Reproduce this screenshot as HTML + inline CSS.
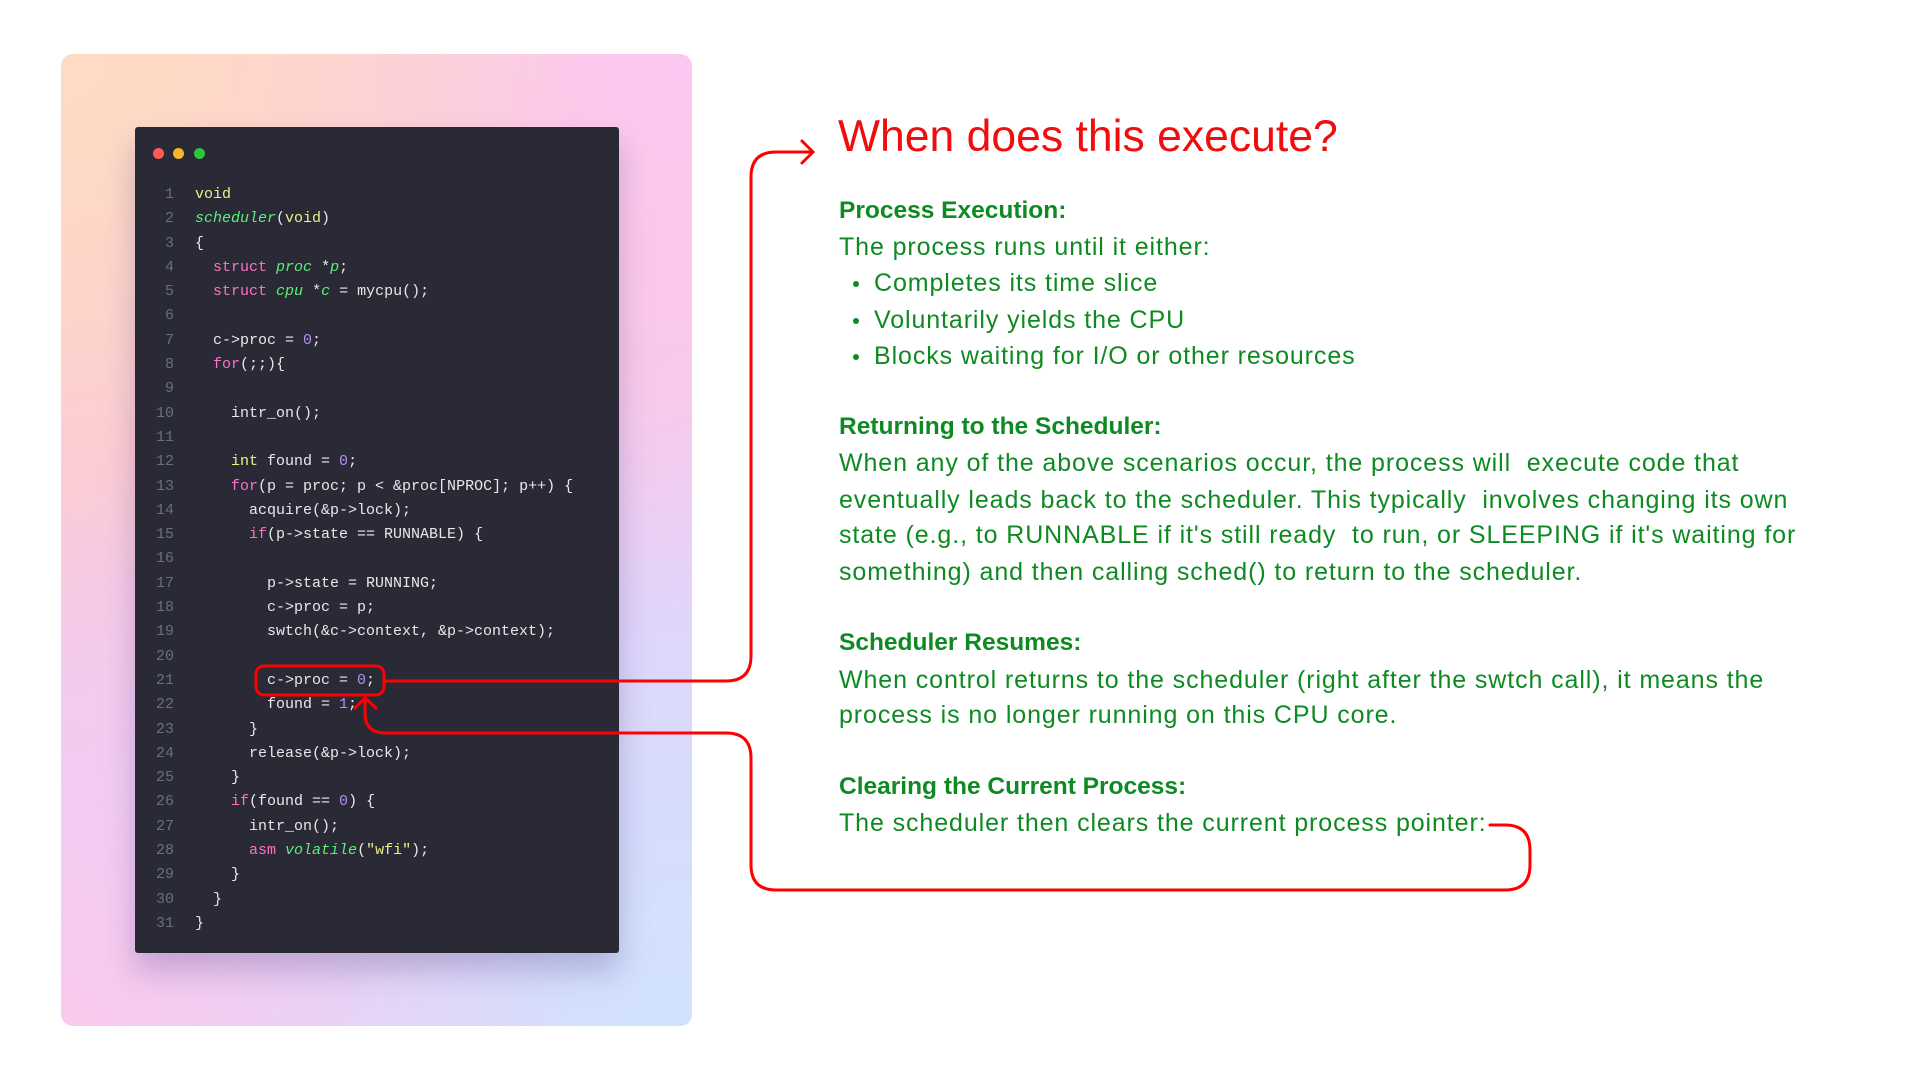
<!DOCTYPE html>
<html><head><meta charset="utf-8"><style>
*{margin:0;padding:0;box-sizing:border-box}
body{width:1920px;height:1080px;background:#fff;position:relative;overflow:hidden;font-family:"Liberation Sans",sans-serif}
.card{position:absolute;left:61px;top:54px;width:631px;height:972px;border-radius:12px;
background:
radial-gradient(circle at 0% 0%,#fedcc4 0%,rgba(254,220,196,0) 45%),
radial-gradient(circle at 100% 0%,#fcc8f2 0%,rgba(252,200,242,0) 50%),
radial-gradient(circle at 0% 100%,#fbc9ec 0%,rgba(251,201,236,0) 45%),
radial-gradient(circle at 100% 100%,#d2e2fd 0%,rgba(210,226,253,0) 55%),
linear-gradient(160deg,#fdd0c8 0%,#fcc8d8 35%,#e8cefa 65%,#d6d8fc 100%);}
.win{position:absolute;left:135px;top:127px;width:484px;height:826px;background:#292a36;border-radius:3px;box-shadow:0 18px 30px rgba(60,40,120,.25)}
.dot{position:absolute;top:148px;width:11px;height:11px;border-radius:50%}
pre{position:absolute;top:183px;left:135px;font-family:"Liberation Mono",monospace;font-size:15px;line-height:24.3px;color:#e8e8ea}
.n{display:inline-block;width:39px;text-align:right;color:#6c6e7c;margin-right:21px}
.y{color:#eef08a}.g{color:#5af078;font-style:italic}.p{color:#ff6fc6}.u{color:#b48ef5}
.t{position:absolute;left:839px;color:#0e8a22;font-size:25px;white-space:nowrap;letter-spacing:.9px}
.h{font-weight:bold;font-size:24.5px;letter-spacing:0}
.b{left:874px}.dotb{position:absolute;left:853px;width:6px;height:6px;border-radius:50%;background:#0e8a22}
.title{position:absolute;left:838px;top:112px;font-size:44.5px;color:#f00d0d;white-space:nowrap}
</style></head><body>
<div class="card"></div>
<div class="win"></div>
<div class="dot" style="left:153px;background:#fe5b55"></div>
<div class="dot" style="left:173px;background:#f8b42a"></div>
<div class="dot" style="left:194px;background:#2bc740"></div>
<pre><span class="n">1</span><span class="y">void</span>
<span class="n">2</span><span class="g">scheduler</span>(<span class="y">void</span>)
<span class="n">3</span>{
<span class="n">4</span>  <span class="p">struct</span> <span class="g">proc</span> *<span class="g">p</span>;
<span class="n">5</span>  <span class="p">struct</span> <span class="g">cpu</span> *<span class="g">c</span> = mycpu();
<span class="n">6</span>
<span class="n">7</span>  c-&gt;proc = <span class="u">0</span>;
<span class="n">8</span>  <span class="p">for</span>(;;){
<span class="n">9</span>
<span class="n">10</span>    intr_on();
<span class="n">11</span>
<span class="n">12</span>    <span class="y">int</span> found = <span class="u">0</span>;
<span class="n">13</span>    <span class="p">for</span>(p = proc; p &lt; &amp;proc[NPROC]; p++) {
<span class="n">14</span>      acquire(&amp;p-&gt;lock);
<span class="n">15</span>      <span class="p">if</span>(p-&gt;state == RUNNABLE) {
<span class="n">16</span>
<span class="n">17</span>        p-&gt;state = RUNNING;
<span class="n">18</span>        c-&gt;proc = p;
<span class="n">19</span>        swtch(&amp;c-&gt;context, &amp;p-&gt;context);
<span class="n">20</span>
<span class="n">21</span>        c-&gt;proc = <span class="u">0</span>;
<span class="n">22</span>        found = <span class="u">1</span>;
<span class="n">23</span>      }
<span class="n">24</span>      release(&amp;p-&gt;lock);
<span class="n">25</span>    }
<span class="n">26</span>    <span class="p">if</span>(found == <span class="u">0</span>) {
<span class="n">27</span>      intr_on();
<span class="n">28</span>      <span class="p">asm</span> <span class="g">volatile</span>(<span class="y">"wfi"</span>);
<span class="n">29</span>    }
<span class="n">30</span>  }
<span class="n">31</span>}</pre>

<div class="title">When does this execute?</div>
<div class="t h" style="top:197px">Process Execution:</div>
<div class="t" style="top:233px">The process runs until it either:</div>
<div class="dotb" style="top:281px"></div><div class="t b" style="top:269px">Completes its time slice</div>
<div class="dotb" style="top:318px"></div><div class="t b" style="top:306px">Voluntarily yields the CPU</div>
<div class="dotb" style="top:354px"></div><div class="t b" style="top:342px">Blocks waiting for I/O or other resources</div>
<div class="t h" style="top:413px">Returning to the Scheduler:</div>
<div class="t" style="top:449px">When any of the above scenarios occur, the process will&nbsp; execute code that</div>
<div class="t" style="top:486px">eventually leads back to the scheduler. This typically&nbsp; involves changing its own</div>
<div class="t" style="top:521px">state (e.g., to RUNNABLE if it's still ready&nbsp; to run, or SLEEPING if it's waiting for</div>
<div class="t" style="top:558px">something) and then calling sched() to return to the scheduler.</div>
<div class="t h" style="top:629px">Scheduler Resumes:</div>
<div class="t" style="top:666px">When control returns to the scheduler (right after the swtch call), it means the</div>
<div class="t" style="top:701px">process is no longer running on this CPU core.</div>
<div class="t h" style="top:773px">Clearing the Current Process:</div>
<div class="t" style="top:809px">The scheduler then clears the current process pointer:</div>

<svg width="1920" height="1080" style="position:absolute;left:0;top:0" fill="none" stroke="#f00" stroke-width="3" stroke-linecap="round" stroke-linejoin="round">
<rect x="256" y="666" width="128" height="29" rx="8"/>
<path d="M384 681 H726 Q751 681 751 656 V177 Q751 152 776 152 H813"/>
<path d="M802 141 L813 152 L802 163"/>
<path d="M365 699 V713 Q365 733 385 733 H726 Q751 733 751 758 V865 Q751 890 776 890 H1505 Q1530 890 1530 865 V850 Q1530 825 1505 825 H1490"/>
<path d="M355 708 L365 698 L376 708"/>
</svg>
</body></html>
